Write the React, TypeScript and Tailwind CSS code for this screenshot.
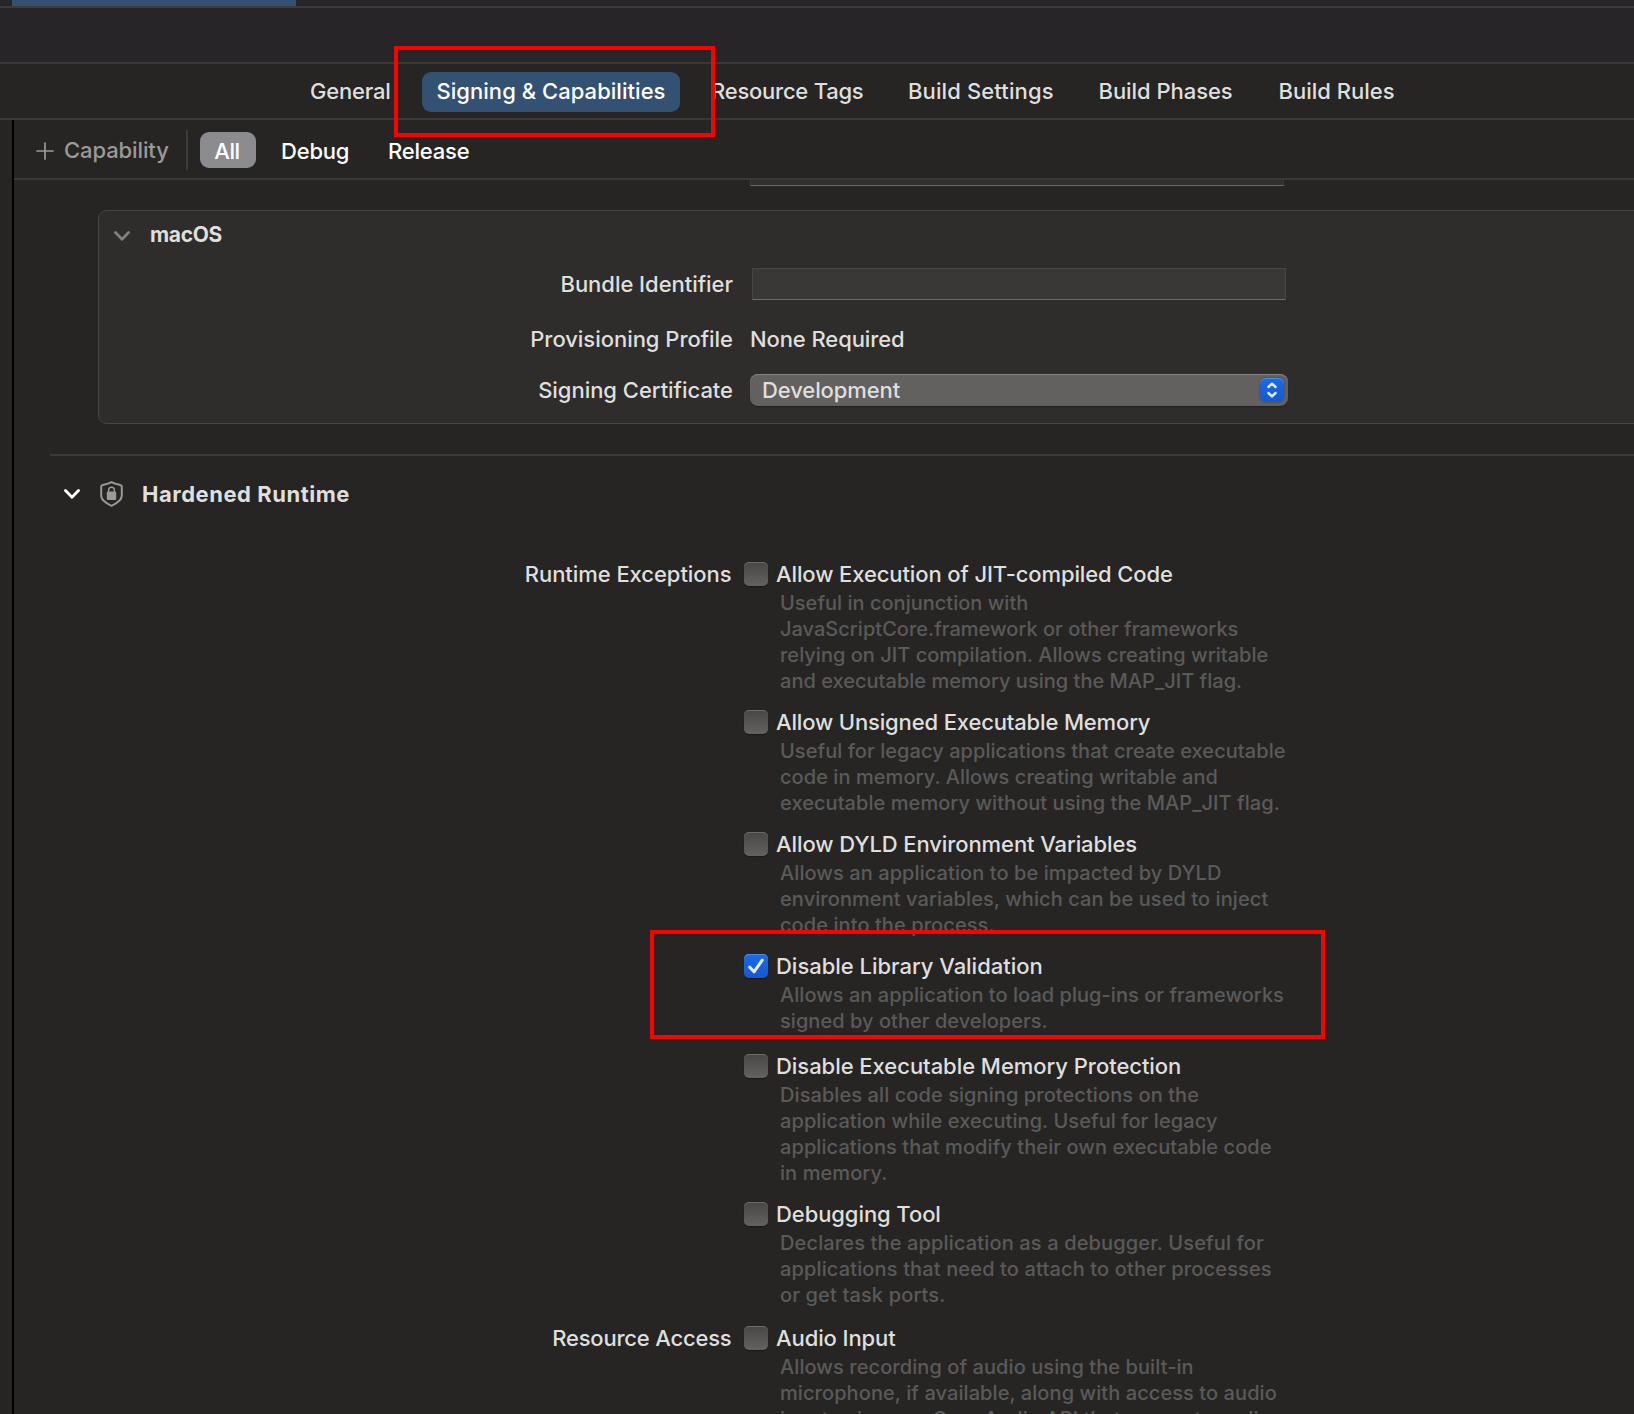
import type { ReactNode } from "react";

type Option = {
  title: string;
  titleTracking: string;
  lines: string[];
  lineTracking: string;
  checked?: boolean;
  spacing: string;
};

const runtimeExceptions: Option[] = [
  {
    title: "Allow Execution of JIT-compiled Code",
    titleTracking: "tracking-[-0.11px]",
    lines: [
      "Useful in conjunction with",
      "JavaScriptCore.framework or other frameworks",
      "relying on JIT compilation. Allows creating writable",
      "and executable memory using the MAP_JIT flag.",
    ],
    lineTracking: "tracking-[0.02px]",
    spacing: "mb-4",
  },
  {
    title: "Allow Unsigned Executable Memory",
    titleTracking: "tracking-[-0.15px]",
    lines: [
      "Useful for legacy applications that create executable",
      "code in memory. Allows creating writable and",
      "executable memory without using the MAP_JIT flag.",
    ],
    lineTracking: "tracking-[0.06px]",
    spacing: "mb-4",
  },
  {
    title: "Allow DYLD Environment Variables",
    titleTracking: "tracking-[-0.09px]",
    lines: [
      "Allows an application to be impacted by DYLD",
      "environment variables, which can be used to inject",
      "code into the process.",
    ],
    lineTracking: "tracking-[0.08px]",
    spacing: "mb-4",
  },
  {
    title: "Disable Library Validation",
    titleTracking: "tracking-[-0.02px]",
    lines: ["Allows an application to load plug-ins or frameworks", "signed by other developers."],
    lineTracking: "tracking-[0.04px]",
    checked: true,
    spacing: "mb-5",
  },
  {
    title: "Disable Executable Memory Protection",
    titleTracking: "tracking-[-0.04px]",
    lines: [
      "Disables all code signing protections on the",
      "application while executing. Useful for legacy",
      "applications that modify their own executable code",
      "in memory.",
    ],
    lineTracking: "tracking-[0.08px]",
    spacing: "mb-4",
  },
  {
    title: "Debugging Tool",
    titleTracking: "tracking-[-0.08px]",
    lines: [
      "Declares the application as a debugger. Useful for",
      "applications that need to attach to other processes",
      "or get task ports.",
    ],
    lineTracking: "tracking-[0.14px]",
    spacing: "mb-[18px]",
  },
];

const resourceAccess: Option[] = [
  {
    title: "Audio Input",
    titleTracking: "tracking-[-0.1px]",
    lines: [
      "Allows recording of audio using the built-in",
      "microphone, if available, along with access to audio",
      "input using any Core Audio API that supports audio",
      "input.",
    ],
    lineTracking: "tracking-[0.08px]",
    spacing: "mb-4",
  },
];

function Checkbox({ checked }: { checked?: boolean }) {
  return checked ? (
    <span className="flex size-6 shrink-0 items-center justify-center rounded-[5px] bg-linear-to-b from-[#1a6be8] to-[#1559cf] shadow-[inset_0_1px_0_#4d8cec,0_1px_1px_rgba(0,0,0,0.35)]">
      <svg width="24" height="24" viewBox="0 0 24 24" fill="none" stroke="#e6edfa" strokeWidth="3" strokeLinecap="round" strokeLinejoin="round">
        <path d="M5.8 13.2 10 17.8 18.2 6.2" />
      </svg>
    </span>
  ) : (
    <span className="size-6 shrink-0 rounded-[5px] bg-linear-to-b from-[#484746] to-[#636261] shadow-[inset_0_1px_0_#6a6968,0_1px_1px_rgba(0,0,0,0.35)]" />
  );
}

function OptionRow({ option }: { option: Option }) {
  return (
    <div className={option.spacing}>
      <div className="flex h-6 items-center">
        <Checkbox checked={option.checked} />
        <span className={`ml-2 leading-6 ${option.titleTracking}`}>{option.title}</span>
      </div>
      <div className={`mt-1 ml-9 text-xl leading-[26px] text-[#5b5a59] ${option.lineTracking}`}>
        {option.lines.map((line) => (
          <div key={line}>{line}</div>
        ))}
      </div>
    </div>
  );
}

function OptionGroup({ label, labelTracking, options }: { label: string; labelTracking: string; options: Option[] }) {
  return (
    <div className="flex">
      <div className={`w-[717.5px] shrink-0 text-right leading-6 ${labelTracking}`}>{label}</div>
      <div className="ml-[12.5px]">
        {options.map((o) => (
          <OptionRow key={o.title} option={o} />
        ))}
      </div>
    </div>
  );
}

function Field({ label, className, children }: { label: string; className: string; children: ReactNode }) {
  return (
    <div className={`flex h-8 items-center ${className}`}>
      <span className="mr-px w-[634px] shrink-0 text-right tracking-[-0.03px]">{label}</span>
      {children}
    </div>
  );
}

function Chevron({ className }: { className: string }) {
  return (
    <svg className={className} width="16" height="10" viewBox="0 0 16 10" fill="none" stroke="currentColor" strokeWidth="2.8" strokeLinecap="round" strokeLinejoin="round">
      <path d="M1.5 1.5 8 8.2 14.5 1.5" />
    </svg>
  );
}

export default function App() {
  return (
    <div className="relative flex h-[1414px] w-[1634px] flex-col overflow-hidden bg-[#262524] font-['Inter',sans-serif] text-[22px] font-[450] whitespace-pre text-[#dfdfde]">
      <div className="h-2 shrink-0 border-b-2 border-[#3c3b3a] bg-[#272527] pl-3">
        <div className="h-1.5 w-[284px] bg-[#335172]" />
      </div>
      <div className="h-14 shrink-0 border-b-2 border-[#3a3938] bg-[#272527]" />

      <nav className="flex h-14 shrink-0 items-center border-b-2 border-[#3a3938] pl-[310px] font-medium">
        <span className="w-[112px] tracking-[-0.2px]">General</span>
        <span className="mt-0.5 flex h-10 w-[258px] items-center justify-center rounded-[9px] bg-[#335172] pb-0.5 tracking-[0.04px] text-white">Signing &amp; Capabilities</span>
        <span className="ml-[31px] w-[197px] tracking-[-0.24px]">Resource Tags</span>
        <span className="w-[190.5px] tracking-[0.12px]">Build Settings</span>
        <span className="w-[180px] tracking-[-0.05px]">Build Phases</span>
        <span className="tracking-[0px]">Build Rules</span>
      </nav>

      <div className="flex min-h-0 grow">
        <div className="w-3.5 shrink-0 border-r-2 border-black" />
        <main className="flex min-w-0 grow flex-col">
          <div className="flex h-[60px] shrink-0 items-center border-b-2 border-[#3a3938] pl-[22px] font-medium text-white">
            <svg className="mt-[3px]" width="18" height="18" viewBox="0 0 18 18" stroke="#9b9a99" strokeWidth="1.7" strokeLinecap="round">
              <path d="M9 1v16M1 9h16" />
            </svg>
            <span className="mt-0.5 ml-2.5 w-[122px] font-[450] tracking-[-0.1px] text-[#9b9a99]">Capability</span>
            <span className="mt-0.5 h-10 w-0.5 bg-[#3d3c3b]" />
            <span className="mt-0.5 ml-3 flex h-9 w-14 items-center justify-center rounded-[9px] bg-[#8c8b90] pt-0.5 pr-0.5 tracking-[-0.4px]">All</span>
            <span className="mt-1 ml-[25px] w-[107px] tracking-[-0.2px]">Debug</span>
            <span className="mt-1 tracking-[-0.2px]">Release</span>
          </div>

          <div className="ml-[736px] h-1.5 w-[534px] shrink-0 border-x border-b border-x-[#3b3a39] border-b-[#6b6a69] bg-[#302f2e]" />

          <section className="mt-6 -mr-4 ml-[84px] h-[214px] shrink-0 rounded-[9px] border border-[#474645] bg-[#2e2d2b]">
            <div className="flex h-[49px] items-center pl-[15px]">
              <Chevron className="text-[#81807f]" />
              <span className="ml-5 pb-0.5 text-[21px] font-bold tracking-[-0.35px]">macOS</span>
            </div>
            <Field label="Bundle Identifier" className="mt-2">
              <span className="ml-[18px] h-8 w-[534px] border border-[#474645] border-b-[#6b6a69] bg-[#393836]" />
            </Field>
            <Field label="Provisioning Profile" className="mt-[23px]">
              <span className="ml-4 tracking-[-0.1px]">None Required</span>
            </Field>
            <Field label="Signing Certificate" className="mt-[19px]">
              <span className="ml-4 flex h-8 w-[538px] items-center justify-between rounded-[8px] bg-[#62615f] pr-1 pl-3 tracking-[-0.1px] shadow-[inset_0_1px_0_#81807e,0_1px_1px_rgba(0,0,0,0.35)]">
                Development
                <span className="size-6 rounded-[6px] bg-linear-to-b from-[#1a6be8] to-[#1559cf] shadow-[inset_0_1px_0_#4d8cec,0_0_2px_rgba(0,0,0,0.4)]">
                  <svg width="24" height="24" viewBox="0 0 24 24" fill="none" stroke="#dfe8f9" strokeWidth="2.4" strokeLinecap="round" strokeLinejoin="round">
                    <path d="M8.4 9 12 5.7 15.6 9M8.4 15l3.6 3.3 3.6-3.3" />
                  </svg>
                </span>
              </span>
            </Field>
          </section>

          <section className="mt-[30px] ml-9 border-t-2 border-[#3a3938]">
            <div className="flex h-[76px] items-center pl-3.5">
              <Chevron className="text-white" />
              <svg className="ml-5" width="23" height="26" viewBox="0 0 23 26" fill="none">
                <path d="M11.5 1.2C9.4 2.5 6.4 3.3 2.8 3.9 1.7 4.1 1.2 4.6 1.2 5.6V14.6C1.2 19.4 5.6 22.2 11.5 24.8 17.4 22.2 21.8 19.4 21.8 14.6V5.6C21.8 4.6 21.3 4.1 20.2 3.9 16.6 3.3 13.6 2.5 11.5 1.2Z" stroke="#9b9a99" strokeWidth="2" strokeLinejoin="round" />
                <rect x="6.8" y="10.6" width="9.4" height="8.4" rx="1.2" fill="#9b9a99" />
                <path d="M8.6 11.4V9.4a2.9 3.1 0 0 1 5.8 0V11.4" stroke="#9b9a99" strokeWidth="1.4" />
              </svg>
              <span className="ml-[19px] font-bold tracking-[0.53px]">Hardened Runtime</span>
            </div>
          </section>

          <section className="mt-[30px]">
            <OptionGroup label="Runtime Exceptions" labelTracking="tracking-[-0.06px]" options={runtimeExceptions} />
            <OptionGroup label="Resource Access" labelTracking="tracking-[-0.2px]" options={resourceAccess} />
          </section>
        </main>
      </div>

      <div className="absolute top-[46px] left-[394px] h-[91px] w-[321px] border-4 border-[#ff0000]" />
      <div className="absolute top-[930px] left-[650px] h-[109px] w-[675px] border-4 border-[#ff0000]" />
    </div>
  );
}
